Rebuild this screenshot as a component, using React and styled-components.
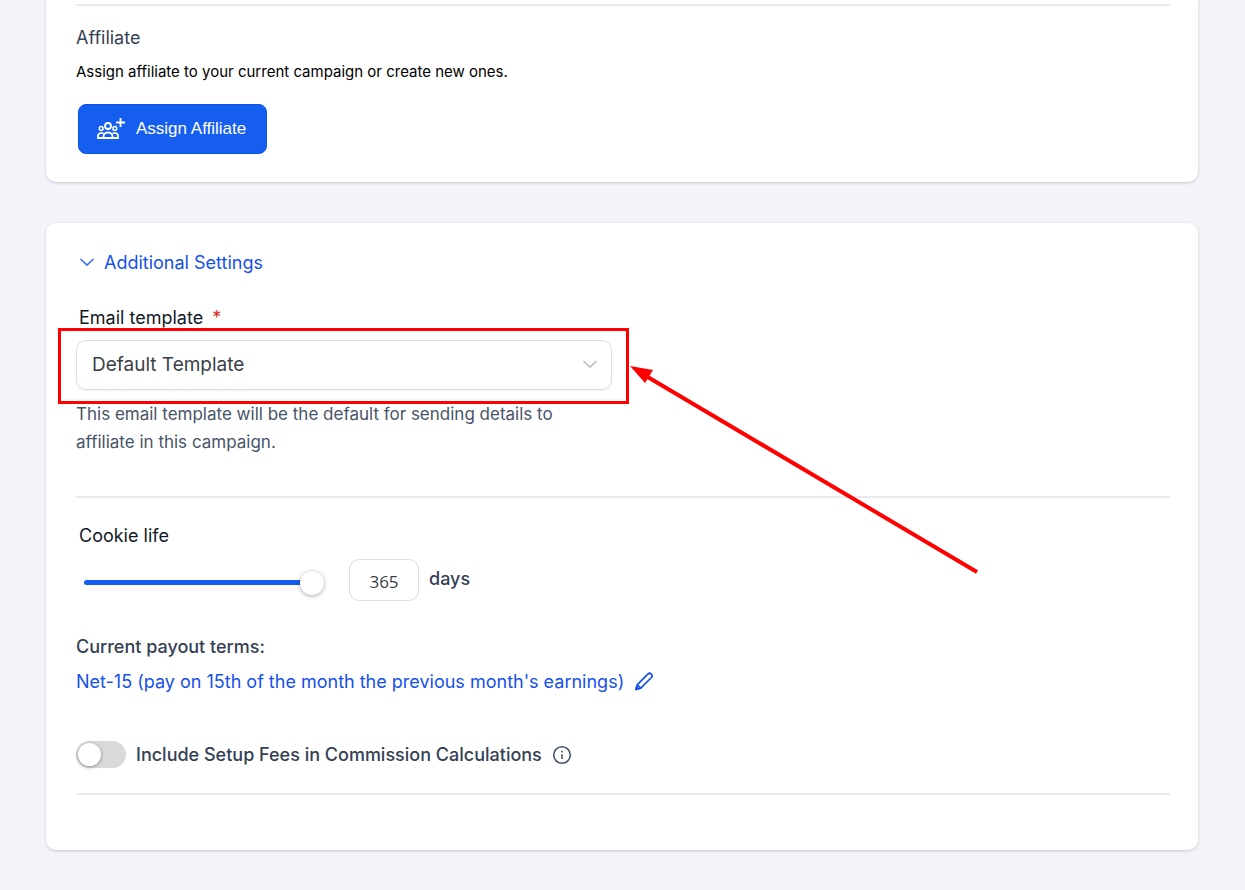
import React, { useState } from "react";
import styled, { createGlobalStyle } from "styled-components";

const App = () => {
  const [days, setDays] = useState(365);
  const [includeFees, setIncludeFees] = useState(false);

  return (
    <>
      <GlobalStyle />
      <Page>
        <Card $cut>
          <Divider />
          <Section>
            <SectionTitle>Affiliate</SectionTitle>
            <SectionText>
              Assign affiliate to your current campaign or create new ones.
            </SectionText>
            <AssignBtn type="button">
              <GroupAddIcon />
              Assign Affiliate
            </AssignBtn>
          </Section>
        </Card>

        <Card>
          <Collapse type="button" aria-expanded="true">
            <Chevron $color="#3b74f2" />
            Additional Settings
          </Collapse>

          <FieldLabel htmlFor="template">
            Email template <Required>*</Required>
          </FieldLabel>
          <SelectBox>
            <Select id="template" defaultValue="default">
              <option value="default">Default Template</option>
            </Select>
            <SelectIcon>
              <Chevron $color="#b9bcc1" />
            </SelectIcon>
            <Highlight />
            <Arrow viewBox="0 0 350 210" aria-hidden="true">
              <path d="M16 10 347 206" stroke="#ff0000" strokeWidth="4" />
              <path d="M0 0 23 4 15 17Z" fill="#ff0000" />
            </Arrow>
          </SelectBox>
          <Help>
            This email template will be the default for sending details to
            affiliate in this campaign.
          </Help>
          <Divider />

          <CookieLabel htmlFor="cookie">Cookie life</CookieLabel>
          <CookieRow>
            <Range
              id="cookie"
              type="range"
              min="1"
              max="365"
              value={days}
              onChange={(e) => setDays(Number(e.target.value))}
              style={{ "--fill": `${(days / 365) * 100}%` }}
            />
            <DaysInput
              id="days"
              type="text"
              value={days}
              onChange={(e) => setDays(Number(e.target.value) || 0)}
            />
            <DaysLabel htmlFor="days">days</DaysLabel>
          </CookieRow>

          <TermsTitle>Current payout terms:</TermsTitle>
          <TermsLink href="#terms">
            Net-15 (pay on 15th of the month the previous month's earnings)
            <PencilIcon />
          </TermsLink>

          <FeesRow>
            <Toggle
              id="fees"
              type="checkbox"
              checked={includeFees}
              onChange={(e) => setIncludeFees(e.target.checked)}
            />
            <FeesLabel htmlFor="fees">
              Include Setup Fees in Commission Calculations
            </FeesLabel>
            <InfoIcon />
          </FeesRow>
          <Divider />
        </Card>
      </Page>
    </>
  );
};

export default App;

const GroupAddIcon = () => (
  <svg width="30" height="24" viewBox="0 0 30 24" fill="none" stroke="#fff" strokeWidth="1.8">
    <circle cx="12" cy="9" r="3" />
    <circle cx="5.2" cy="11.5" r="1.9" strokeWidth="1.5" />
    <circle cx="18.8" cy="11.5" r="1.9" strokeWidth="1.5" />
    <path d="M7.5 21v-1.500a4.500 4 0 0 1 9 0V21" />
    <path d="M7.5 16.200H5c-2 0-3 1.200-3 2.800v2h20v-2c0-1.600-1-2.800-3-2.800h-2.500" />
    <path d="M24.500 1v9M20 5.500h9" />
  </svg>
);

const Chevron = ({ $color }) => (
  <svg width="16" height="16" viewBox="0 0 16 16" fill="none" stroke={$color} strokeWidth="1.6">
    <path d="M1.500 5 8 11.200 14.500 5" />
  </svg>
);

const PencilIcon = () => (
  <svg width="20" height="20" viewBox="0 0 20 20" fill="none" stroke="#1650ea" strokeWidth="1.7" strokeLinejoin="round">
    <path d="M2 17.500 3.200 12.800 13.800 2.200a2.300 2.300 0 0 1 3.600 3.300L6.800 16.200Z" />
    <path d="M3.200 12.800 6.800 16.200" />
    <path d="M2 17.500 2.600 15 4.400 16.800Z" fill="#1650ea" />
  </svg>
);

const InfoIcon = () => (
  <svg width="20" height="20" viewBox="0 0 20 20" fill="none" stroke="#475467" strokeWidth="1.6">
    <circle cx="10" cy="10" r="8.3" />
    <path d="M10 9.200V14M10 5.800v1.800" />
  </svg>
);

const GlobalStyle = createGlobalStyle`
  * {
    box-sizing: border-box;
  }
  body {
    margin: 0;
    background: #f2f4f8;
    font-family: Inter, "Liberation Sans", sans-serif;
    font-size: 18px;
    color: #111827;
  }
`;

const Page = styled.main`
  display: flex;
  flex-direction: column;
  gap: 41px;
  padding: 0 47px 40px 46px;
`;

const Card = styled.section`
  display: flex;
  flex-direction: column;
  align-items: flex-start;
  padding: ${({ $cut }) => ($cut ? "4px 28px 28px 30px" : "27px 28px 55px 30px")};
  border-radius: ${({ $cut }) => ($cut ? "0 0 10px 10px" : "10px")};
  background: #fff;
  box-shadow: 0 1px 3px rgba(16, 24, 40, 0.2);
`;

const Divider = styled.hr`
  width: 100%;
  height: 2px;
  margin: 0;
  border: 0;
  background: #e9ebf0;
`;

const Section = styled.div`
  padding-top: 20px;
`;

const SectionTitle = styled.h2`
  margin: 0;
  font-size: 18px;
  line-height: 24px;
  font-weight: 400;
  color: #344054;
`;

const SectionText = styled.p`
  margin: 12px 0 22px;
  font-size: 15px;
  line-height: 20px;
  color: #000;
`;

const AssignBtn = styled.button`
  display: flex;
  align-items: center;
  gap: 10px;
  min-width: 189px;
  height: 50px;
  margin-left: 2px;
  padding: 0 17px;
  border: 1px solid #0b55e6;
  border-radius: 8px;
  background: #155eef;
  color: #fff;
  font-family: "Liberation Sans", Arial, sans-serif;
  font-size: 17px;
  cursor: pointer;
`;

const Collapse = styled.button`
  display: flex;
  align-items: center;
  gap: 9px;
  height: 24px;
  margin-left: 3px;
  padding: 0;
  border: 0;
  background: none;
  color: #1650ea;
  font-family: inherit;
  font-size: 18px;
  cursor: pointer;
`;

const FieldLabel = styled.label`
  margin: 32px 0 10px 3px;
  line-height: 24px;
`;

const Required = styled.span`
  margin-left: 4px;
  color: #d92d20;
`;

const SelectBox = styled.div`
  position: relative;
  width: 100%;
  max-width: 536px;
`;

const Select = styled.select`
  display: block;
  width: 100%;
  height: 50px;
  padding: 0 15px 2px;
  border: 1px solid #dcdee3;
  border-radius: 10px;
  background: #fff;
  box-shadow: 0 1px 2px rgba(16, 24, 40, 0.06);
  color: #3a3f47;
  font-family: inherit;
  font-size: 19px;
  appearance: none;
`;

const SelectIcon = styled.span`
  position: absolute;
  top: 16px;
  right: 14px;
  height: 16px;
  pointer-events: none;
  svg {
    display: block;
  }
`;

const Highlight = styled.div`
  position: absolute;
  inset: -12px -17px -14px -18px;
  border: 3px solid #ff0000;
  pointer-events: none;
`;

const Arrow = styled.svg`
  position: absolute;
  top: 26px;
  left: 554px;
  width: 350px;
  height: 210px;
  pointer-events: none;
`;

const Help = styled.p`
  width: 100%;
  max-width: 536px;
  margin: 10px 0 40px;
  font-size: 17px;
  line-height: 28px;
  color: #475467;
`;

const CookieLabel = styled.label`
  margin: 26px 0 11px 3px;
  line-height: 24px;
`;

const CookieRow = styled.div`
  display: flex;
  align-items: center;
  padding-left: 8px;
`;

const Range = styled.input`
  width: 240px;
  height: 24px;
  margin: 4px 25px 0 0;
  background: none;
  appearance: none;
  &::-webkit-slider-runnable-track {
    height: 5px;
    border-radius: 3px;
    background: linear-gradient(#155eef, #155eef) 0 0 / var(--fill) 100% no-repeat #dcdcdc;
  }
  &::-webkit-slider-thumb {
    width: 24px;
    height: 24px;
    margin-top: -9px;
    border: 0;
    border-radius: 50%;
    background: #fff;
    box-shadow: 0 1px 4px rgba(0, 0, 0, 0.35);
    appearance: none;
  }
`;

const DaysInput = styled.input`
  width: 70px;
  height: 42px;
  padding: 2px 0 0;
  border: 1px solid #dcdee3;
  border-radius: 10px;
  background: #fff;
  color: #3a3f47;
  font-family: "Open Sans", "Noto Sans", sans-serif;
  font-size: 17px;
  text-align: center;
`;

const DaysLabel = styled.label`
  margin-left: 10px;
  padding-bottom: 2px;
  line-height: 24px;
  font-weight: 500;
  color: #344054;
`;

const TermsTitle = styled.h3`
  margin: 34px 0 11px;
  font-size: 18px;
  line-height: 24px;
  font-weight: 500;
  color: #344054;
`;

const TermsLink = styled.a`
  display: flex;
  align-items: center;
  gap: 10px;
  line-height: 24px;
  color: #1650ea;
  text-decoration: none;
`;

const FeesRow = styled.div`
  display: flex;
  align-items: center;
  gap: 10px;
  margin: 47px 0 25px;
`;

const Toggle = styled.input`
  display: flex;
  align-items: center;
  width: 50px;
  height: 27px;
  margin: 0;
  padding: 0 2px;
  border-radius: 14px;
  background: #dadada;
  appearance: none;
  cursor: pointer;
  &::before {
    content: "";
    width: 23px;
    height: 23px;
    border-radius: 50%;
    background: #fff;
    box-shadow: 0 1px 4px rgba(0, 0, 0, 0.35);
  }
  &:checked {
    justify-content: flex-end;
    background: #155eef;
  }
`;

const FeesLabel = styled.label`
  line-height: 24px;
  font-weight: 500;
  color: #344054;
`;
